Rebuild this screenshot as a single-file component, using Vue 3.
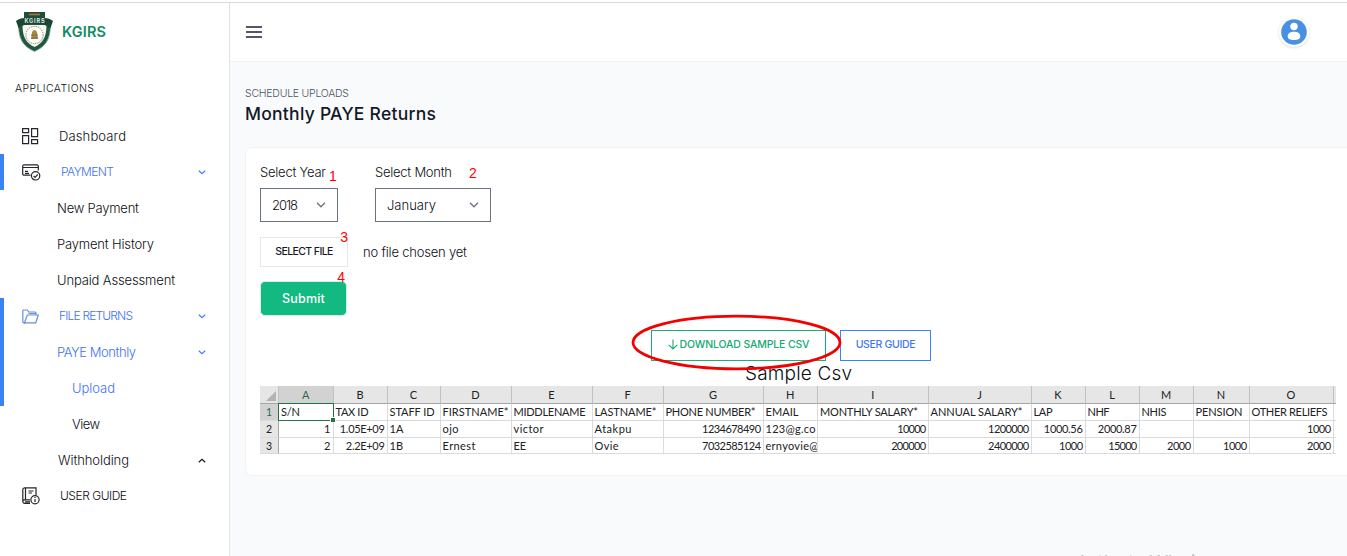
<script setup>
// Tracks a label out (or in) so that it spans the given width in pixels.
const vFit = {
  mounted(el, { value }) {
    if (!value) return
    const natural = el.getBoundingClientRect().width
    const gaps = Math.max(el.textContent.trim().length - 1, 1)
    el.style.letterSpacing = `${((value - natural) / gaps).toFixed(3)}px`
  },
}

const menu = [
  { label: 'Dashboard', w: 67, icon: 'grid', indent: 59 },
  { label: 'PAYMENT', w: 53, icon: 'card', indent: 61, active: true, bar: true, chevron: 'down', caps: true },
  { label: 'New Payment', w: 82, indent: 57 },
  { label: 'Payment History', w: 97, indent: 57 },
  { label: 'Unpaid Assessment', w: 118, indent: 57 },
  { label: 'FILE RETURNS', w: 74, icon: 'folder', indent: 59, active: true, bar: true, chevron: 'down', caps: true },
  { label: 'PAYE Monthly', w: 79, indent: 57, active: true, bar: true, chevron: 'down' },
  { label: 'Upload', w: 43, indent: 72, active: true, bar: true },
  { label: 'View', w: 28, indent: 72 },
  { label: 'Withholding', w: 71, indent: 58, chevron: 'up' },
  { label: 'USER GUIDE', w: 67, icon: 'book', indent: 60, caps: true },
]

const columns = [
  { id: 'A', head: 'S/N', w: 19, rows: ['1', '2'], right: true },
  { id: 'B', head: 'TAX ID', w: 33, rows: ['1.05E+09', '2.2E+09'], rw: [45, 39], right: true },
  { id: 'C', head: 'STAFF ID', w: 45, rows: ['1A', '1B'] },
  { id: 'D', head: 'FIRSTNAME*', w: 66, rows: ['ojo', 'Ernest'], rw: [16, 33] },
  { id: 'E', head: 'MIDDLENAME', w: 72, rows: ['victor', 'EE'], rw: [30, 0] },
  { id: 'F', head: 'LASTNAME*', w: 62, rows: ['Atakpu', 'Ovie'], rw: [37, 24] },
  { id: 'G', head: 'PHONE NUMBER*', w: 90, rows: ['1234678490', '7032585124'], rw: [59, 59], right: true },
  { id: 'H', head: 'EMAIL', w: 33, rows: ['123@g.co', 'ernyovie@'], rw: [50, 53] },
  { id: 'I', head: 'MONTHLY SALARY*', w: 98, rows: ['10000', '200000'], rw: [29, 35], right: true },
  { id: 'J', head: 'ANNUAL SALARY*', w: 92, rows: ['1200000', '2400000'], rw: [41, 41], right: true },
  { id: 'K', head: 'LAP', w: 19, rows: ['1000.56', '1000'], rw: [39, 24], right: true },
  { id: 'L', head: 'NHF', w: 22, rows: ['2000.87', '15000'], rw: [39, 29], right: true },
  { id: 'M', head: 'NHIS', w: 25, rows: ['', '2000'], rw: [0, 24], right: true },
  { id: 'N', head: 'PENSION', w: 47, rows: ['', '1000'], rw: [0, 24], right: true },
  { id: 'O', head: 'OTHER RELIEFS', w: 76, rows: ['1000', '2000'], rw: [24, 24], right: true },
]
</script>

<template>
  <div class="app">
    <aside class="sidebar">
      <div class="brand">
        <svg class="crest" width="39" height="42" viewBox="0 0 39 42">
          <path d="M3.500 15C4 27 7 35 19.500 40.500C32 35 35 27 35.500 15L31 10H8z" fill="#1c5a40" stroke="#8fa198" stroke-width=".8" />
          <path d="M7.500 14C7.500 26 11 32 19.500 36C28 32 31.500 26 31.500 14z" fill="#f7f5ee" />
          <path d="M9 1h21v6l-3 3H12L9 7z" fill="#1d4f3a" />
          <path d="M14 3.500h11" stroke="#a5763a" stroke-width="1.600" />
          <path d="M1 10C5 6 12 7 19.500 7S34 6 38 10L35.500 17C30 13 25 13 19.500 13S9 13 3.500 17z" fill="#184734" />
          <text x="19.500" y="12.300" text-anchor="middle" class="crest-name" textLength="20">KGIRS</text>
          <circle cx="19.500" cy="24" r="8.600" fill="#fff" stroke="#9c7c65" stroke-width="1" stroke-dasharray="1.300 1" />
          <path d="M17 21q2.500-4 5 0l1 7h-7z" fill="#a98a43" />
          <path d="M16 24h7M16 27h7" stroke="#695e43" stroke-width=".7" />
        </svg>
        <span v-fit="44" class="brand-name">KGIRS</span>
      </div>
      <div class="section"><span v-fit="79">APPLICATIONS</span></div>

      <nav>
        <div
          v-for="item in menu"
          :key="item.label"
          class="item"
          :class="{ active: item.active, bar: item.bar, caps: item.caps }"
        >
          <span class="icon" :class="{ tinted: item.icon === 'folder' }">
            <svg v-if="item.icon === 'grid'" width="17" height="17" viewBox="0 0 17 17">
              <path d="M.6.600h6v4h-6zM9.600.600h6v8h-6zM.6 7.600h6v8h-6zM9.600 11.600h6v4h-6z" />
            </svg>
            <svg v-else-if="item.icon === 'card'" width="19" height="17" viewBox="0 0 19 17">
              <path d="M8.500 11.200H2a1.300 1.300 0 0 1-1.300-1.300V2A1.300 1.300 0 0 1 2 .9h13A1.300 1.300 0 0 1 16.300 2v4.500M1 3.500h15M3 7.300h3M3 9.300h4" />
              <circle cx="13.600" cy="11.800" r="4.200" />
              <path d="m11.600 11.800 1.500 1.500 2.700-3" />
            </svg>
            <svg v-else-if="item.icon === 'folder'" width="18" height="15" viewBox="0 0 18 15">
              <path d="M3.500 13.800H1.800A1 1 0 0 1 .8 12.800V2A1 1 0 0 1 1.800 1h3.500l1.500 2H13a1 1 0 0 1 1 1v2" />
              <path d="M2.500 13.800 5.300 6H16.300L13.700 13.800zM6.500 4.500H14" />
            </svg>
            <svg v-else-if="item.icon === 'book'" width="18" height="18" viewBox="0 0 18 18">
              <path d="M8 16.300H2.500A1.800 1.800 0 0 1 .8 14.500V2.500A1.800 1.800 0 0 1 2.500.8H14V8M3.500 1v12M.8 14.300a1.600 1.600 0 0 1 1.700-1.500H8M6.500 4h5M6.500 6h3.500M3 14.800h5" />
              <circle cx="13" cy="12.700" r="4.100" fill="#fff" />
              <path d="M13 12v3M13 10v1" />
            </svg>
          </span>
          <span class="label" :style="{ marginLeft: item.indent - 22 + 'px' }">
            <span v-fit="item.w">{{ item.label }}</span>
          </span>
          <svg v-if="item.chevron" class="chevron" :class="item.chevron" width="8" height="5" viewBox="0 0 8 5">
            <path d="m.8.8 3.200 3 3.200-3" />
          </svg>
        </div>
      </nav>
    </aside>

    <div class="main">
      <header>
        <svg width="16" height="12" viewBox="0 0 16 12">
          <path d="M0 1h16M0 6h16M0 11h16" stroke="#1b2033" stroke-width="1.500" />
        </svg>
        <svg class="avatar" width="30" height="30" viewBox="0 0 30 30">
          <circle cx="15" cy="15" r="12.800" fill="#4a90e2" />
          <circle cx="15" cy="9.500" r="3.700" fill="#fff" />
          <path d="M8.700 19.500c0-3.300 3-4.700 6.300-4.700s6.300 1.400 6.300 4.700c0 2.500-2.500 3.500-6.300 3.500s-6.300-1-6.300-3.500z" fill="#fff" />
        </svg>
      </header>

      <main>
        <div class="crumb"><span v-fit="104">SCHEDULE UPLOADS</span></div>
        <h1><span v-fit="191">Monthly PAYE Returns</span></h1>

        <section class="card">
          <div class="fields">
            <div class="field year">
              <label><span v-fit="66">Select Year</span></label>
              <div class="select">
                <span v-fit="26">2018</span>
                <svg width="10" height="6" viewBox="0 0 10 6"><path d="m1 .8 4 4 4-4" /></svg>
              </div>
              <b class="mark m1">1</b>
            </div>
            <div class="field month">
              <label><span v-fit="77">Select Month</span></label>
              <div class="select">
                <span v-fit="49">January</span>
                <svg width="10" height="6" viewBox="0 0 10 6"><path d="m1 .8 4 4 4-4" /></svg>
              </div>
              <b class="mark m2">2</b>
            </div>
          </div>

          <div class="file">
            <button class="pick"><span v-fit="58">SELECT FILE</span><b class="mark m3">3</b></button>
            <span v-fit="104" class="hint">no file chosen yet</span>
          </div>
          <button class="submit"><span v-fit="43">Submit</span><b class="mark m4">4</b></button>

          <div class="links">
            <button class="download">
              <svg width="10" height="11" viewBox="0 0 10 11"><path d="M5 .5v9.500M.7 5.800 5 10l4.300-4.200" /></svg>
              <span v-fit="130">DOWNLOAD SAMPLE CSV</span>
              <svg class="ring" width="211" height="57" viewBox="0 0 211 57">
                <ellipse cx="105.500" cy="28.500" rx="103.500" ry="26.300" />
              </svg>
            </button>
            <button class="guide"><span v-fit="60">USER GUIDE</span></button>
          </div>
          <div class="caption"><span v-fit="107">Sample Csv</span></div>

          <div class="sheet">
            <div class="cell head corner"></div>
            <div v-for="c in columns" :key="c.id" class="cell head" :class="{ picked: c.id === 'A' }">{{ c.id }}</div>
            <div class="cell head"></div>

            <div class="cell num picked">1</div>
            <div v-for="c in columns" :key="c.id" class="cell" :class="{ cursor: c.id === 'A' }">
              <span v-fit="c.w">{{ c.head }}</span>
            </div>
            <div class="cell"></div>

            <template v-for="r in 2" :key="r">
              <div class="cell num">{{ r + 1 }}</div>
              <div v-for="c in columns" :key="c.id" class="cell" :class="{ right: c.right }">
                <span v-fit="c.rw && c.rw[r - 1]">{{ c.rows[r - 1] }}</span>
              </div>
              <div class="cell"></div>
            </template>
          </div>
        </section>
      </main>
    </div>
    <div class="watermark"><span v-fit="155">Activate Windows</span></div>
  </div>
</template>

<style>
body {
  background: #f9fafc;
  overflow: hidden;
}
</style>

<style scoped>
* {
  box-sizing: border-box;
}
.app {
  position: relative;
  display: flex;
  height: 556px;
  padding-top: 2px;
  overflow: hidden;
  background: linear-gradient(#fff 2px, #f9fafc 2px);
  font: 300 13px/20px Inter, "Open Sans", sans-serif;
  color: #0c0e14;
  white-space: nowrap;
}
.sidebar {
  width: 230px;
  flex: none;
  background: #fff;
  border-top: 1px solid #d8d8db;
  border-right: 1px solid #e1e3e7;
}
.brand {
  display: flex;
  align-items: center;
  height: 58px;
  padding-left: 15px;
}
.crest {
  margin-top: -1px;
}
.crest-name {
  font: 700 5.5px Inter, sans-serif;
  fill: #e3e8e4;
}
.brand-name {
  margin: -1px 0 0 8px;
  font-size: 14.5px;
  font-weight: 600;
  color: #128a62;
}
.section {
  height: 57px;
  padding: 18px 0 0 15px;
  font-size: 10.5px;
}
.item {
  position: relative;
  display: flex;
  align-items: center;
  height: 36px;
  padding-left: 22px;
}
.caps {
  font-size: 12px;
}
.icon {
  width: 0;
  display: flex;
  overflow: visible;
}
.icon svg {
  flex: none;
  fill: none;
  stroke: #24262b;
  stroke-width: 1.2;
}
.tinted svg {
  stroke: #6491d5;
}
.active {
  color: #4371f4;
}
.bar::before {
  content: "";
  position: absolute;
  left: 0;
  top: 0;
  width: 4px;
  height: 36px;
  background: #3b82f6;
}
.chevron {
  margin-left: auto;
  margin-right: 23px;
  fill: none;
  stroke: #17191f;
  stroke-width: 1.2;
}
.active .chevron {
  stroke: #3b82f6;
}
.up {
  transform: rotate(180deg);
}
.main {
  flex: 1;
  min-width: 0;
}
header {
  display: flex;
  justify-content: space-between;
  align-items: center;
  height: 60px;
  padding: 0 38px 0 16px;
  background: #fff;
  border-top: 1px solid #d8d8db;
  border-bottom: 1px solid #f1f2f4;
}
.avatar {
  border-radius: 50%;
  background: #fff;
  box-shadow: 0 1px 3px #0002;
}
main {
  padding: 22px 0 0 15px;
}
.crumb {
  font-size: 10.5px;
  color: #4b5563;
}
h1 {
  height: 21px;
  margin: 0;
  font-size: 17.5px;
  line-height: 20px;
  font-weight: 500;
  color: #111827;
}
.card {
  height: 329px;
  margin-top: 22px;
  padding: 14px 0 0 14px;
  background: #fff;
  border: 1px solid #f1f3f5;
  border-right: 0;
  border-radius: 7px 0 0 7px;
}
.fields {
  display: flex;
  gap: 37px;
}
.field {
  position: relative;
}
.year .select {
  width: 78px;
}
.month .select {
  width: 116px;
}
.year {
  width: 78px;
}
label {
  display: block;
  height: 26px;
  line-height: 20px;
}
.select {
  display: flex;
  align-items: center;
  justify-content: space-between;
  height: 34px;
  padding: 0 11px;
  border: 1px solid #6b7280;
}
.select svg {
  fill: none;
  stroke: #6b7280;
  stroke-width: 1.3;
}
.mark {
  position: absolute;
  font: 400 14px/14px "Liberation Sans", Arial, sans-serif;
  letter-spacing: 0;
  color: #f00;
}
.m1 {
  left: 69px;
  top: 7px;
}
.m2 {
  left: 94px;
  top: 4px;
}
.m3 {
  right: -1px;
  top: -8px;
}
.m4 {
  right: 1px;
  top: -12px;
}
button {
  position: relative;
  display: flex;
  align-items: center;
  justify-content: center;
  padding: 0 0 2px;
  font: 500 10.5px/16px Inter, "Open Sans", sans-serif;
  background: #fff;
  color: #17191f;
  border: 1px solid #e5e7eb;
}
.file {
  display: flex;
  align-items: center;
  gap: 15px;
  margin-top: 15px;
}
.pick {
  width: 88px;
  height: 30px;
  padding: 0;
}
.submit {
  width: 87px;
  height: 35px;
  margin: 14px 0 0;
  padding: 0;
  background: #12b981;
  border-color: #d5eee5;
  border-radius: 5px;
  color: #fff;
  font-size: 12.5px;
  font-weight: 500;
}
.links {
  display: flex;
  gap: 14px;
  margin: 14px 0 0 391px;
}
.download {
  width: 175px;
  height: 31px;
  gap: 2px;
  border-color: #1cad7c;
  color: #14aa74;
}
.download > svg:first-child {
  fill: none;
  stroke: #14aa74;
  stroke-width: 1.1;
}
.guide {
  width: 91px;
  height: 31px;
  border-color: #3b82f6;
  color: #3f76f4;
}
.ring {
  position: absolute;
  left: -21px;
  top: -17px;
  z-index: 2;
  fill: none;
  stroke: #f40000;
  stroke-width: 2.7;
}
.caption {
  height: 25px;
  padding-left: 485px;
  font-size: 19px;
  line-height: 26px;
}
.sheet {
  display: grid;
  grid-template-columns: 19px 54.500px 54px 53px 71px 81px 71px 100px 54.500px 110.500px 103px 54px 54px 54px 56px 84px 2.500px;
  grid-template-rows: 18px 17px 16.500px 16.500px 1px;
  width: 1076px;
  font: 400 11px/16px Lato, "Open Sans", sans-serif;
  color: #202124;
}
.cell {
  position: relative;
  min-width: 0;
  padding: 0 0 0 2px;
  overflow: hidden;
  border-right: 1px solid #d9dbdd;
  border-bottom: 1px solid #d9dbdd;
}
.cell:nth-child(17n) {
  border-right: 0;
}
.cell.right {
  padding-right: 2px;
  text-align: right;
}
.cell.head {
  padding: 0;
  line-height: 18px;
  text-align: center;
  background: #e6e6e6;
  border-right-color: #c2c2c2;
  border-bottom-color: #a6a6a6;
}
.cell.num {
  padding: 0;
  font-size: 10.5px;
  text-align: center;
  background: #e6e6e6;
  border-right-color: #a6a6a6;
}
.cell.picked {
  background: #d2d2d2;
  color: #2c6b4a;
}
.corner::after {
  content: "";
  position: absolute;
  right: 2px;
  bottom: 2px;
  border-left: 10px solid transparent;
  border-bottom: 10px solid #b4b4b4;
}
.cell.cursor {
  overflow: visible;
  z-index: 1;
}
.cursor::before {
  content: "";
  position: absolute;
  inset: -1px;
  border: 1.500px solid #217346;
}
.cursor::after {
  content: "";
  position: absolute;
  right: -2px;
  bottom: -2px;
  width: 4px;
  height: 4px;
  background: #217346;
  outline: 1px solid #fff;
}
.watermark {
  position: absolute;
  left: 1076px;
  top: 550px;
  font: 400 20px/24px "Open Sans", sans-serif;
  color: #b9bbbe;
}
</style>
